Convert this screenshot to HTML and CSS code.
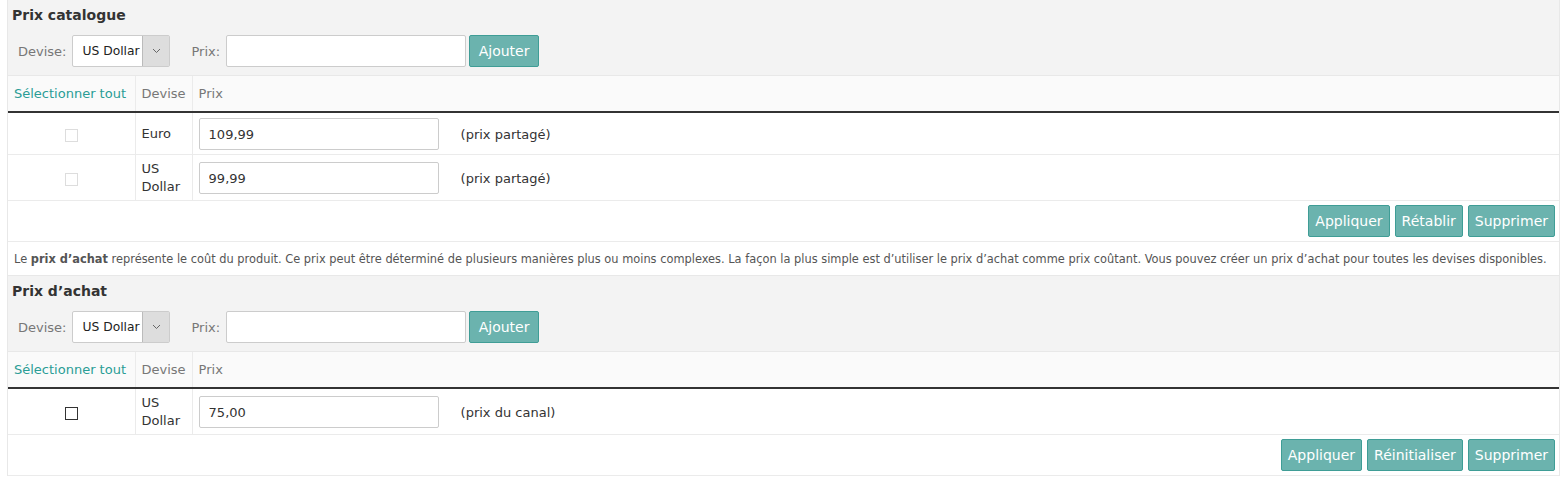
FILE: index.html
```html
<!DOCTYPE html>
<html lang="fr">
<head>
<meta charset="utf-8">
<title>Prix</title>
<link rel="stylesheet" href="styles.css">
</head>
<body>
<div class="wrap">
  <section class="panel">
    <div class="panel-head">
      <h3 class="title">Prix catalogue</h3>
      <div class="form-row">
        <label class="lbl">Devise:</label>
        <div class="select"><span class="select-val">US Dollar</span><span class="select-arrow"><svg width="9" height="6" viewBox="0 0 9 6"><path d="M1 1l3.5 3.5L8 1" fill="none" stroke="#666" stroke-width="1"/></svg></span></div>
        <label class="lbl lbl-prix">Prix:</label>
        <input class="txt" type="text">
        <button class="btn btn-add">Ajouter</button>
      </div>
    </div>
    <table class="grid">
      <thead>
        <tr><th class="c-sel"><span class="link">Sélectionner tout</span></th><th class="c-dev">Devise</th><th class="c-prix">Prix</th></tr>
      </thead>
      <tbody>
        <tr>
          <td class="c-sel"><span class="chk chk-off"></span></td>
          <td class="c-dev">Euro</td>
          <td class="c-prix"><div class="cell-prix"><input class="txt" type="text" value="109,99"><span class="tag">(prix partagé)</span></div></td>
        </tr>
        <tr>
          <td class="c-sel"><span class="chk chk-off"></span></td>
          <td class="c-dev">US<br>Dollar</td>
          <td class="c-prix"><div class="cell-prix"><input class="txt" type="text" value="99,99"><span class="tag">(prix partagé)</span></div></td>
        </tr>
        <tr class="actions">
          <td colspan="3"><div class="btns"><button class="btn">Appliquer</button><button class="btn">Rétablir</button><button class="btn">Supprimer</button></div></td>
        </tr>
      </tbody>
    </table>
  </section>
  <p class="note">Le <b>prix d’achat</b> représente le coût du produit. Ce prix peut être déterminé de plusieurs manières plus ou moins complexes. La façon la plus simple est d’utiliser le prix d’achat comme prix coûtant. Vous pouvez créer un prix d’achat pour toutes les devises disponibles.</p>
  <section class="panel">
    <div class="panel-head">
      <h3 class="title">Prix d’achat</h3>
      <div class="form-row">
        <label class="lbl">Devise:</label>
        <div class="select"><span class="select-val">US Dollar</span><span class="select-arrow"><svg width="9" height="6" viewBox="0 0 9 6"><path d="M1 1l3.5 3.5L8 1" fill="none" stroke="#666" stroke-width="1"/></svg></span></div>
        <label class="lbl lbl-prix">Prix:</label>
        <input class="txt" type="text">
        <button class="btn btn-add">Ajouter</button>
      </div>
    </div>
    <table class="grid">
      <thead>
        <tr><th class="c-sel"><span class="link">Sélectionner tout</span></th><th class="c-dev">Devise</th><th class="c-prix">Prix</th></tr>
      </thead>
      <tbody>
        <tr>
          <td class="c-sel"><span class="chk chk-on"></span></td>
          <td class="c-dev">US<br>Dollar</td>
          <td class="c-prix"><div class="cell-prix"><input class="txt" type="text" value="75,00"><span class="tag">(prix du canal)</span></div></td>
        </tr>
        <tr class="actions">
          <td colspan="3"><div class="btns"><button class="btn">Appliquer</button><button class="btn">Réinitialiser</button><button class="btn">Supprimer</button></div></td>
        </tr>
      </tbody>
    </table>
  </section>
</div>
</body>
</html>
```
FILE: styles.css
```css
* { box-sizing: border-box; }
html, body { margin: 0; padding: 0; background: #fff; }
body {
  font-family: "DejaVu Sans", Verdana, sans-serif;
  font-size: 13px;
  color: #333;
}
.wrap {
  margin-left: 7px;
  width: 1553px;
  border-left: 1px solid #e8e8e8;
  border-right: 1px solid #e8e8e8;
}
.panel-head {
  background: #f3f3f3;
  padding: 5px 0 8px 4px;
  border-bottom: 1px solid #e8e8e8;
}
.title {
  margin: 0;
  font-size: 14px;
  font-weight: bold;
  color: #333;
  line-height: 20px;
}
.form-row {
  display: flex;
  align-items: center;
  margin-top: 10px;
  padding-left: 6px;
  height: 32px;
}
.lbl { color: #777; font-size: 13px; }
.lbl-prix { margin-left: 21px; }
.select {
  display: flex;
  margin-left: 6px;
  width: 98px;
  height: 32px;
  background: #fff;
  border: 1px solid #ccc;
  border-radius: 2px;
}
.select-val {
  flex: 1;
  line-height: 30px;
  padding-left: 9px;
  color: #222;
  font-size: 12.3px;
  white-space: nowrap;
  overflow: hidden;
}
.select-arrow {
  flex: none;
  width: 27px;
  background: #ddd;
  border-left: 1px solid #bbb;
  display: flex;
  align-items: center;
  justify-content: center;
}
.txt {
  width: 240px;
  height: 32px;
  border: 1px solid #ccc;
  border-radius: 2px;
  background: #fff;
  font: 13px "DejaVu Sans", Verdana, sans-serif;
  color: #333;
  padding: 0 9px;
}
.form-row .txt { margin-left: 6px; }
.btn {
  height: 32px;
  padding: 0 6px;
  background: #6bb3ae;
  border: 1px solid #3f9d96;
  border-radius: 2px;
  color: #fff;
  font: 14px "DejaVu Sans", Verdana, sans-serif;
}
.form-row .btn { margin-left: 3px; }
.btn-add { width: 70px; padding: 0; }
.grid {
  width: 100%;
  border-collapse: collapse;
}
.grid th {
  background: #fafafa;
  font-weight: normal;
  text-align: left;
  color: #777;
  height: 36px;
  padding: 0 6px;
  border-bottom: 2px solid #333;
  white-space: nowrap;
}
.grid th + th, .grid td + td { border-left: 1px solid #ebebeb; }
.grid .c-sel { width: 127px; }
.grid td.c-sel { text-align: center; }
.grid .c-dev { width: 56px; }
.link { color: #2a9d96; }
.grid td {
  border-bottom: 1px solid #ebebeb;
  padding: 5px 6px 4px;
  height: 42px;
  color: #333;
}
.grid td.c-dev { line-height: 18px; }
.chk {
  display: inline-block;
  width: 13px;
  height: 13px;
  vertical-align: middle;
  background: #fff;
}
.chk-off { border: 1px solid #ddd; }
.chk-on { border: 1px solid #333; }
.cell-prix { display: flex; align-items: center; }
.tag { margin-left: 22px; color: #333; }
.grid .actions td { height: 41px; padding: 4px 4px 0 0; vertical-align: top; }
.btns { display: flex; justify-content: flex-end; gap: 5px; }
.note {
  margin: 0;
  padding: 0 6px;
  height: 34px;
  line-height: 34px;
  font-size: 11.4px;
  color: #555;
  border-bottom: 1px solid #e8e8e8;
  white-space: nowrap;
}
.note b { color: #555; }
```
